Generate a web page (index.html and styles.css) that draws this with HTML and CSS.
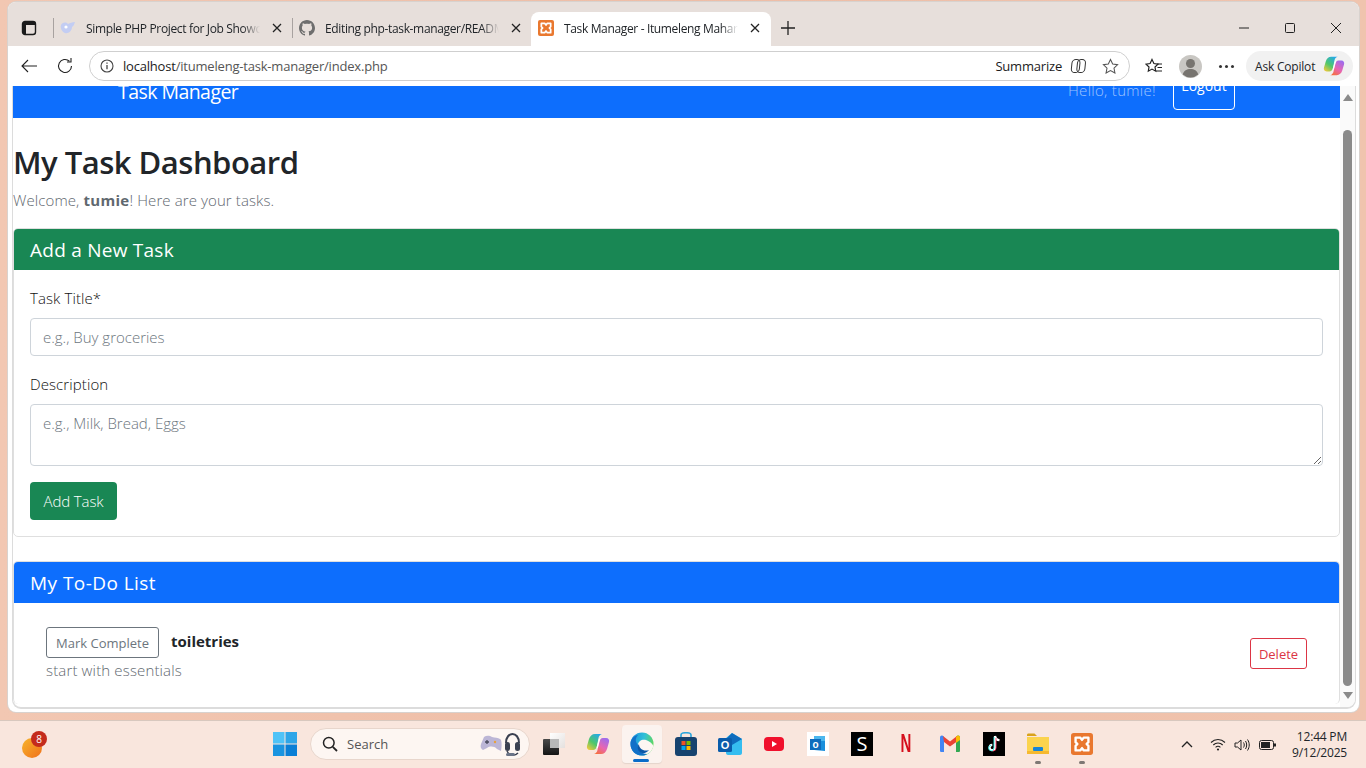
FILE: index.html
```html
<!DOCTYPE html>
<html lang="en">
<head>
  <meta charset="UTF-8" />
  <title>Task Manager - Itumeleng Maharaj</title>
  <link rel="stylesheet" href="styles.css">
</head>
<body>
  <div class="desktop">
    <div class="window">
      <div class="tabstrip">
        <svg class="tab-side" width="16" height="16" viewBox="0 0 16 16"><rect x="1.5" y="1.5" width="13" height="13" rx="2.5" fill="none" stroke="#1b1b1b" stroke-width="1.4"/><path d="M2 2h12v3H2zM2 5h3v9H2z" fill="#1b1b1b"/></svg>
        <span class="tab-sep"></span>
        <div class="tab">
          <svg width="16" height="16" viewBox="0 0 16 16"><path d="M1 5c2-3 5-3 7-1 2-1 4-2 7-2-1 2-1 4-3 5 0 4-4 7-7 6C2 12 0 8 1 5z" fill="#c3cdf3"/><circle cx="6" cy="7" r="1.600" fill="#fff"/></svg>
          <span class="tab-title">Simple PHP Project for Job Showcase</span>
          <svg class="tab-x" width="10" height="10" viewBox="0 0 10 10"><path d="M1 1l8 8M9 1l-8 8" stroke="#222" stroke-width="1.3"/></svg>
        </div>
        <span class="tab-sep"></span>
        <div class="tab">
          <svg width="16" height="16" viewBox="0 0 16 16"><path fill="#6e6e6e" d="M8 0C3.6 0 0 3.6 0 8c0 3.5 2.3 6.5 5.5 7.6.4.1.5-.2.5-.4v-1.4c-2.2.5-2.7-1-2.7-1-.4-.9-.9-1.2-.9-1.2-.7-.5.1-.5.1-.5.8.1 1.2.8 1.2.8.7 1.2 1.9.9 2.3.7.1-.5.3-.9.5-1.1-1.8-.2-3.6-.9-3.6-4 0-.9.3-1.6.8-2.1-.1-.2-.4-1 .1-2.1 0 0 .7-.2 2.2.8.6-.2 1.3-.3 2-.3s1.4.1 2 .3c1.5-1 2.2-.8 2.2-.8.4 1.1.2 1.9.1 2.1.5.6.8 1.3.8 2.1 0 3.1-1.9 3.7-3.6 3.9.3.3.5.8.5 1.5v2.2c0 .2.1.5.6.4C13.7 14.5 16 11.5 16 8c0-4.4-3.6-8-8-8z"/></svg>
          <span class="tab-title">Editing php-task-manager/README.md</span>
          <svg class="tab-x" width="10" height="10" viewBox="0 0 10 10"><path d="M1 1l8 8M9 1l-8 8" stroke="#222" stroke-width="1.3"/></svg>
        </div>
        <div class="tab tab-active">
          <svg width="16" height="16" viewBox="0 0 24 24"><use href="#xampp"/></svg>
          <span class="tab-title">Task Manager - Itumeleng Maharaj</span>
          <svg class="tab-x" width="10" height="10" viewBox="0 0 10 10"><path d="M1 1l8 8M9 1l-8 8" stroke="#222" stroke-width="1.3"/></svg>
        </div>
        <svg class="tab-plus" width="14" height="14" viewBox="0 0 14 14"><path d="M7 0v14M0 7h14" stroke="#222" stroke-width="1.3"/></svg>
        <div class="win-controls">
          <svg width="12" height="12" viewBox="0 0 12 12"><path d="M1 6h10" stroke="#222"/></svg>
          <svg width="12" height="12" viewBox="0 0 12 12"><rect x="1.5" y="1.5" width="9" height="9" rx="1" fill="none" stroke="#222"/></svg>
          <svg width="12" height="12" viewBox="0 0 12 12"><path d="M1 1l10 10M11 1L1 11" stroke="#222"/></svg>
        </div>
      </div>

      <div class="toolbar">
        <svg class="tool-back" width="18" height="16" viewBox="0 0 18 16"><path d="M17 8H2M8 2L2 8l6 6" fill="none" stroke="#222" stroke-width="1.1"/></svg>
        <svg class="tool-reload" width="18" height="18" viewBox="0 0 18 18"><path d="M15.5 9A6.5 6.5 0 1 1 13.4 4.2M15 1v4h-4" fill="none" stroke="#222" stroke-width="1.1"/></svg>
        <div class="address">
          <svg width="14" height="14" viewBox="0 0 14 14"><circle cx="7" cy="7" r="6" fill="none" stroke="#444" stroke-width="1.1"/><path d="M7 6v4.2M7 3.5v1.3" stroke="#444" stroke-width="1.3"/></svg>
          <span class="url"><span class="url-host">localhost</span>/itumeleng-task-manager/index.php</span>
          <span class="summarize">Summarize</span>
          <svg width="18" height="16" viewBox="0 0 18 16"><rect x="2.500" y="1.500" width="8" height="13" rx="3.600" transform="skewX(-6) translate(1 0)" fill="none" stroke="#333"/><rect x="7" y="1.500" width="8" height="13" rx="3.600" transform="skewX(-6) translate(2 0)" fill="none" stroke="#333"/></svg>
          <svg class="addr-star" width="17" height="17" viewBox="0 0 18 18"><path d="M9 1.500l2.300 4.900 5.200.7-3.800 3.600 1 5.200L9 13.300l-4.700 2.600 1-5.200L1.500 7.100l5.200-.7z" fill="none" stroke="#555" stroke-width="1.1"/></svg>
        </div>
        <svg class="tool-favs" width="18" height="17" viewBox="0 0 18 17"><path d="M7 1.500l1.900 4 4.100.6-3 2.900.7 4.200L7 11.100l-3.700 2.100.7-4.200-3-2.900 4.100-.6z" fill="none" stroke="#222" stroke-width="1.2"/><path d="M12 6h5M12.500 9.500H17M11 13h6" stroke="#222" stroke-width="1.100"/></svg>
        <svg class="tool-avatar" width="23" height="23" viewBox="0 0 23 23"><circle cx="11.500" cy="11.500" r="11.500" fill="#c9c7c3"/><circle cx="11.500" cy="8.500" r="4.500" fill="#77746f"/><path d="M3.800 19.500c1-4 4-5.500 7.700-5.500s6.700 1.500 7.700 5.500a11.500 11.500 0 0 1-15.400 0z" fill="#77746f"/></svg>
        <span class="tool-dots"><i></i><i></i><i></i></span>
        <div class="copilot-pill">
          <span>Ask Copilot</span>
          <svg width="22" height="22" viewBox="0 0 24 24"><use href="#copilot"/></svg>
        </div>
      </div>

      <div class="viewport">
        <div class="page">
          <nav class="navbar">
            <span class="brand">Task Manager</span>
            <div class="nav-right">
              <span class="hello">Hello, tumie!</span>
              <button class="btn-logout">Logout</button>
            </div>
          </nav>

          <div class="content">
            <h1>My Task Dashboard</h1>
            <p class="lead">Welcome, <strong>tumie</strong>! Here are your tasks.</p>

            <section class="card">
              <h2 class="card-head head-green">Add a New Task</h2>
              <form class="card-body">
                <label class="field-label" for="title">Task Title*</label>
                <input class="field" id="title" type="text" placeholder="e.g., Buy groceries">
                <label class="field-label" for="desc">Description</label>
                <textarea class="field field-area" id="desc" placeholder="e.g., Milk, Bread, Eggs"></textarea>
                <button class="btn-add" type="button">Add Task</button>
              </form>
            </section>

            <section class="card card-list">
              <h2 class="card-head head-blue">My To-Do List</h2>
              <div class="todo-row">
                <div>
                  <div class="todo-top">
                    <button class="btn-mark">Mark Complete</button>
                    <strong class="todo-name">toiletries</strong>
                  </div>
                  <div class="todo-desc">start with essentials</div>
                </div>
                <button class="btn-delete">Delete</button>
              </div>
            </section>
          </div>
        </div>

        <div class="scrollbar">
          <span class="arrow-up"></span>
          <span class="thumb"></span>
          <span class="arrow-down"></span>
        </div>
      </div>
    </div>
  </div>

  <footer class="taskbar">
    <div class="weather"><span class="sun"></span><span class="badge">8</span></div>
    <div class="task-center">
      <svg class="start" width="24" height="24" viewBox="0 0 24 24"><path d="M0 0h11.500v11.500H0z" fill="#4fc3f7"/><path d="M12.500 0H24v11.500H12.500z" fill="#2ea6e8"/><path d="M0 12.500h11.500V24H0z" fill="#1a94e0"/><path d="M12.500 12.500H24V24H12.500z" fill="#0a7fd6"/></svg>
      <div class="search">
        <svg width="16" height="16" viewBox="0 0 16 16"><circle cx="6.800" cy="6.800" r="5.300" fill="none" stroke="#222" stroke-width="1.500"/><path d="M10.800 10.800L15 15" stroke="#222" stroke-width="1.800"/></svg>
        <span class="search-text">Search</span>
        <svg class="search-art" width="42" height="26" viewBox="0 0 42 26"><path d="M1 13l3-7c3-2 6-1 8 0 3 .5 6 1 8 2 2 1 2 7 1 12l-4-2c-3-3-7-3-10-1l-4 2c-2-1-3-3-2-6z" fill="#bcb6d6"/><path d="M5 11h4M7 9v4" stroke="#4a4a5c" stroke-width="1.300"/><circle cx="15" cy="11" r="1.200" fill="#e8a03c"/><path d="M26 12c0-12 13-12 13 0" fill="none" stroke="#3a4050" stroke-width="2"/><rect x="25" y="11" width="5" height="9" rx="2.500" fill="#3a4050"/><rect x="35" y="11" width="5" height="9" rx="2.500" fill="#3a4050"/><path d="M27 20c2 5 8 5 11 2" fill="none" stroke="#3a4050" stroke-width="1.500"/><rect x="26" y="22" width="9" height="3" rx="1.500" fill="#6a7488"/></svg>
      </div>
      <div class="task-icons">
        <span class="task-icon">
          <svg width="22" height="22" viewBox="0 0 22 22"><defs><linearGradient id="tv-a" x1="0" y1="0" x2="1" y2="1"><stop offset="0" stop-color="#fff"/><stop offset="1" stop-color="#e4e0de"/></linearGradient><linearGradient id="tv-b" x1="0" y1="0" x2="0" y2="1"><stop offset="0" stop-color="#4a4a4a"/><stop offset="1" stop-color="#141414"/></linearGradient></defs><rect x="7" y="0" width="15" height="15" fill="url(#tv-a)"/><rect y="6" width="16" height="16" rx="1" fill="url(#tv-b)"/><rect x="7" y="6" width="9" height="9" fill="#b8b8b8"/></svg>
        </span>
        <span class="task-icon">
          <svg width="24" height="24" viewBox="0 0 24 24">
            <defs>
              <linearGradient id="cp-a" x1="0.800" y1="0" x2="0.100" y2="1"><stop offset="0" stop-color="#23a8ee"/><stop offset=".55" stop-color="#4fc76a"/><stop offset="1" stop-color="#f6c93a"/></linearGradient>
              <linearGradient id="cp-b" x1="0.800" y1="0" x2="0.200" y2="1"><stop offset="0" stop-color="#9a6cf0"/><stop offset=".55" stop-color="#e866b0"/><stop offset="1" stop-color="#f6703c"/></linearGradient>
              <g id="copilot">
                <path d="M9 2h7c-2 .5-3 2-3.500 4L11 14c-.7 2.500-2 4-4 4H4c-2.500 0-3.500-2-3-4l2-7c1-3 3-5 6-5z" fill="url(#cp-a)"/>
                <path d="M15 22H8c2-.5 3-2 3.500-4L13 10c.7-2.500 2-4 4-4h3c2.500 0 3.500 2 3 4l-2 7c-1 3-3 5-6 5z" fill="url(#cp-b)"/>
                <path d="M10.500 15.500l2.200-8c.3-.8 1-1.200 1.800-1.200l-2.500 9c-.3.800-.8 1.500-1.500.200z" fill="#fff"/>
              </g>
              <g id="xampp">
                <rect width="24" height="24" rx="3" fill="#e9782f"/>
                <path d="M5 5h5l2 2.500L14 5h5v5l-2 2 2 2v5h-5l-2-2.500L10 19H5v-5l2-2-2-2z" fill="none" stroke="#fff" stroke-width="2.600" stroke-linejoin="round"/>
              </g>
            </defs>
            <use href="#copilot"/>
          </svg>
        </span>
        <span class="task-icon task-icon-active">
          <svg width="24" height="24" viewBox="0 0 24 24"><defs><linearGradient id="edge-a" x1="0" y1="0.300" x2="1" y2="0.500"><stop offset="0" stop-color="#1b8fe0"/><stop offset=".55" stop-color="#2fc0d8"/><stop offset="1" stop-color="#62d85c"/></linearGradient></defs><circle cx="12" cy="12" r="11.500" fill="url(#edge-a)"/><path d="M8 13c0-4 4-6 8-5 3 1 6 3 7.500 6-1 4-3.500 7-6.500 8-5 1-9-3-9-9z" fill="#fdf6f2"/><path d="M8 13c-1 5 3 9 9 9-2 1-3 1.500-5 1.500C6 23.500 .5 19 .5 12 .5 8 3 4 8 3 5 6 5 10 8 13z" fill="#1170c8"/><path d="M9 12c0 4 3 6.500 7 6.500 1 0 2 0 3-.5-2 3-6 4-8.500 2.500C8 19 6.500 15 9 12z" fill="#0b58a8"/></svg>
          <i class="active-bar"></i>
        </span>
        <span class="task-icon">
          <svg width="22" height="24" viewBox="0 0 22 24"><path d="M6 6V3c0-3 10-3 10 0v3" fill="none" stroke="#2aa5dc" stroke-width="1.600"/><rect x="0" y="5" width="22" height="19" rx="3" fill="#17436f"/><rect x="6.500" y="9" width="4" height="4" fill="#f25022"/><rect x="11.500" y="9" width="4" height="4" fill="#7fba00"/><rect x="6.500" y="14" width="4" height="4" fill="#00a4ef"/><rect x="11.500" y="14" width="4" height="4" fill="#ffb900"/></svg>
        </span>
        <span class="task-icon">
          <svg width="24" height="24" viewBox="0 0 24 24"><path d="M14 1l10 6v14c0 1-1 2-2 2H10c-1 0-2-1-2-2V6z" fill="#35bdf0"/><path d="M14 1l10 6-10 6-6-6z" fill="#0f6cbd"/><rect y="6" width="14" height="14" rx="1.500" fill="#0a5cab"/><text x="7" y="17" class="icon-letter">O</text></svg>
        </span>
        <span class="task-icon">
          <svg width="20" height="14" viewBox="0 0 20 14"><rect width="20" height="14" rx="4" fill="#f0102c"/><path d="M8 4l5 3-5 3z" fill="#fff"/></svg>
        </span>
        <span class="task-icon">
          <svg width="22" height="24" viewBox="0 0 22 24"><rect width="22" height="24" fill="#fff"/><path d="M7 5l11-1v15l-11-1z" fill="#1a8fdc"/><path d="M7 4h11v5H7z" fill="#4cb7ee"/><rect x="3" y="7" width="11" height="11" fill="#0f6cbd"/><text x="8.500" y="15.500" class="icon-letter icon-letter-sm">o</text></svg>
        </span>
        <span class="task-icon"><span class="tile tile-s">S</span></span>
        <span class="task-icon"><span class="tile-n">N</span></span>
        <span class="task-icon">
          <svg width="20" height="17" viewBox="0 0 20 17"><path d="M0 2.500C0 1 1.500 0 3 1l1 .8V17H1.500C.5 17 0 16.500 0 15.500z" fill="#4285f4"/><path d="M20 2.500C20 1 18.500 0 17 1l-1 .8V17h2.500c1 0 1.500-.5 1.500-1.500z" fill="#34a853"/><path d="M3 1l7 5.500L17 1v5.500l-7 5-6-4.500z" fill="#ea4335"/><path d="M16 1.800L17 1c1.500-1 3 0 3 1.500V5l-4 3z" fill="#fbbc04"/></svg>
        </span>
        <span class="task-icon">
          <span class="tile">
            <svg width="16" height="18" viewBox="0 0 16 18"><path d="M9 1v11.500a2.700 2.700 0 1 1-2.700-2.700" fill="none" stroke="#fff" stroke-width="2.200"/><path d="M9 1c.3 2.600 2 4 4.500 4.200" fill="none" stroke="#fff" stroke-width="2.200"/><path d="M8 2v11a2.700 2.700 0 1 1-2.700-2.700" fill="none" stroke="#25f4ee" stroke-width=".8"/><path d="M10 3v10a3 3 0 0 1-3 3" fill="none" stroke="#fe2c55" stroke-width=".8"/></svg>
          </span>
        </span>
        <span class="task-icon">
          <svg width="22" height="22" viewBox="0 0 22 22"><path d="M0 2c0-1 .5-1.500 1.500-1.500h6L10 3h-10z" fill="#d9a21b"/><path d="M0 4h22v17H0z" fill="#fbd34d"/><rect x="6" y="14" width="10" height="4" rx="1" fill="#1684d6"/><path d="M0 18h22v3H0z" fill="#f6b92f"/></svg>
          <i class="run-dot"></i>
        </span>
        <span class="task-icon">
          <svg width="22" height="24" viewBox="0 0 24 24"><use href="#xampp"/></svg>
          <i class="run-dot"></i>
        </span>
      </div>
    </div>
    <div class="tray">
      <svg class="tray-chevron" width="12" height="7" viewBox="0 0 12 7"><path d="M1 6l5-5 5 5" fill="none" stroke="#222" stroke-width="1.300"/></svg>
      <svg width="16" height="13" viewBox="0 0 16 13"><path d="M1 4.500c4-4 10-4 14 0M3.300 7c2.700-2.700 6.700-2.700 9.400 0M5.600 9.300c1.400-1.400 3.400-1.400 4.800 0" fill="none" stroke="#222" stroke-width="1.100"/><circle cx="8" cy="11.500" r="1.100" fill="#222"/></svg>
      <svg width="17" height="14" viewBox="0 0 17 14"><path d="M1 5h2.500L7 2v10L3.500 9H1z" fill="none" stroke="#222"/><path d="M9.500 4.500c1 1.500 1 3.500 0 5M11.500 3c1.600 2.500 1.600 5.500 0 8M13.500 1.500c2.300 3.500 2.300 7.500 0 11" fill="none" stroke="#222"/></svg>
      <svg width="17" height="10" viewBox="0 0 17 10"><rect x=".5" y=".5" width="14" height="9" rx="2" fill="none" stroke="#222"/><rect x="2" y="2" width="9" height="6" fill="#222"/><rect x="15" y="3.500" width="2" height="3" fill="#222"/></svg>
      <div class="clock"><span>12:44 PM</span><span>9/12/2025</span></div>
    </div>
  </footer>
</body>
</html>
```
FILE: styles.css
```css
html, body {
  margin: 0;
  height: 768px;
  overflow: hidden;
}
body {
  display: flex;
  flex-direction: column;
  font-family: "Open Sans", "Noto Sans", sans-serif;
  color: #212529;
}
svg { flex: none; display: block; }

.desktop {
  height: 720px;
  padding: 2px 7px 8px 8px;
  box-sizing: border-box;
  background: linear-gradient(90deg, #f2c7b2, #eebda6 50%, #f0c4ae);
}
.window {
  height: 710px;
  background: #fff;
  border-radius: 8px;
  display: flex;
  flex-direction: column;
  overflow: hidden;
  box-shadow: 0 0 0 1px #d8d2ce;
}

/* browser tabs */
.tabstrip {
  height: 44px;
  background: #e7dfdb;
  display: flex;
  align-items: flex-end;
  flex: none;
}
.tab-side { margin: 0 0 10px 13px; }
.tab-sep {
  width: 1px;
  height: 20px;
  background: #a8a2a0;
  margin: 0 0 8px 16px;
}
.tab {
  width: 235px;
  height: 34px;
  box-sizing: border-box;
  display: flex;
  align-items: center;
  padding: 0 7px 2px 6px;
  gap: 10px;
  font-size: 12px;
  letter-spacing: -0.35px;
}
.tab + .tab-sep { margin-left: 3px; }
.tab-title {
  flex: 1;
  white-space: nowrap;
  overflow: hidden;
  -webkit-mask-image: linear-gradient(90deg, #000 90%, transparent);
  mask-image: linear-gradient(90deg, #000 90%, transparent);
}
.tab-x { margin-left: 2px; }
.tab-active {
  background: #fff;
  width: 240px;
  border-radius: 8px 8px 0 0;
  margin-left: 3px;
  padding-left: 7px;
  padding-right: 11px;
}
.tab-plus { margin: 0 0 11px 10px; }
.win-controls {
  margin-left: auto;
  display: flex;
  gap: 34px;
  padding: 0 17px 12px 0;
}

/* address row */
.toolbar {
  height: 40px;
  flex: none;
  display: flex;
  align-items: center;
  background: #fff;
}
.tool-back { margin-left: 12px; }
.tool-reload { margin-left: 18px; }
.address {
  width: 1041px;
  height: 30px;
  box-sizing: border-box;
  margin-left: 15px;
  border: 1px solid #cfcfcf;
  border-radius: 15px;
  display: flex;
  align-items: center;
  padding: 0 10px;
  font-size: 13px;
}
.url {
  flex: 1;
  margin-left: 9px;
  color: #555;
  letter-spacing: -0.2px;
}
.url-host { color: #1b1b1b; }
.summarize {
  margin-right: 7px;
  color: #1b1b1b;
  letter-spacing: -0.2px;
}
.addr-star { margin-left: 15px; }
.tool-favs { margin-left: 15px; }
.tool-avatar { margin-left: 16px; }
.tool-dots {
  display: flex;
  gap: 3px;
  margin-left: 17px;
}
.tool-dots i {
  width: 3px;
  height: 3px;
  border-radius: 50%;
  background: #333;
}
.copilot-pill {
  margin-left: 12px;
  width: 107px;
  height: 30px;
  box-sizing: border-box;
  border-radius: 15px;
  background: #f1f1f1;
  display: flex;
  align-items: center;
  justify-content: space-between;
  padding: 0 8px 0 9px;
  font-size: 12px;
  letter-spacing: -0.2px;
}

/* page in the browser, scrolled a little */
.viewport {
  height: 621px;
  margin: 0 4px 5px 5px;
  display: flex;
  flex: none;
  overflow: hidden;
  border-radius: 0 0 8px 8px;
  box-shadow: 0 1px 0 1px #dcdcdc;
}
.page {
  width: 1327px;
  flex: none;
  overflow: hidden;
}
.navbar {
  height: 56px;
  margin-top: -24px;
  background: #0d6efd;
  display: flex;
  align-items: center;
  justify-content: space-between;
  padding: 0 105px;
  box-sizing: border-box;
}
.brand {
  color: #fff;
  font-size: 19.5px;
  letter-spacing: -0.55px;
  padding-top: 2px;
}
.nav-right {
  display: flex;
  align-items: center;
  gap: 17px;
}
.hello {
  color: rgba(255, 255, 255, 0.6);
  font-size: 15px;
  font-weight: 300;
  letter-spacing: 0.3px;
}
.btn-logout {
  width: 62px;
  height: 38px;
  margin-top: 1px;
  background: transparent;
  border: 1px solid #fff;
  border-radius: 4px;
  color: #fff;
  font: inherit;
  font-size: 14px;
  padding: 0 0 10px;
}
.content { padding-top: 24px; }
h1 {
  margin: 0;
  font-size: 31px;
  line-height: 40px;
  font-weight: 600;
  letter-spacing: -0.5px;
}
.lead {
  margin: 7px 0 17px;
  font-size: 15px;
  line-height: 22px;
  font-weight: 300;
  color: #5f686f;
  letter-spacing: 0.1px;
}
.lead strong { font-weight: 700; letter-spacing: 0.3px; }

.card {
  border: 1px solid #dfdfdf;
  border-radius: 5px;
  overflow: hidden;
  margin-bottom: 24px;
}
.card-list { margin-bottom: 0; border-bottom: 0; }
.card-head {
  margin: 0;
  height: 41px;
  padding: 0 16px;
  box-sizing: border-box;
  font-size: 19px;
  line-height: 43px;
  font-weight: 500;
  color: #fff;
  letter-spacing: 0.25px;
}
.head-green { background: #198754; }
.head-blue { background: #0d6efd; letter-spacing: 0.45px; }
.card-body {
  padding: 16px;
  display: flex;
  flex-direction: column;
  align-items: flex-start;
}
.field-label {
  font-size: 15px;
  line-height: 24px;
  margin-bottom: 8px;
  font-weight: 300;
  color: #111;
  letter-spacing: 0.1px;
}
.field {
  width: 100%;
  height: 38px;
  box-sizing: border-box;
  border: 1px solid #ced4da;
  border-radius: 4px;
  padding: 6px 12px;
  margin-bottom: 16px;
  font: inherit;
  font-size: 15px;
  font-weight: 300;
  letter-spacing: 0;
}
.field::placeholder { color: #6c757d; }
.field-area {
  height: 62px;
  padding-top: 8px;
  display: block;
}
.btn-add {
  width: 87px;
  height: 38px;
  background: #198754;
  border: 0;
  border-radius: 4px;
  color: #fff;
  font: inherit;
  font-size: 15px;
  font-weight: 300;
  letter-spacing: -0.1px;
  padding: 0;
}

.todo-row {
  display: flex;
  align-items: center;
  justify-content: space-between;
  padding: 24px 32px;
}
.todo-top {
  display: flex;
  align-items: center;
  gap: 12px;
}
.btn-mark {
  width: 113px;
  height: 31px;
  background: #fff;
  border: 1px solid #6c757d;
  border-radius: 3px;
  color: #6c757d;
  font: inherit;
  font-size: 13px;
  letter-spacing: 0;
  padding: 0;
}
.todo-name {
  font-size: 15px;
  font-weight: 700;
  margin-top: -3px;
  letter-spacing: 0;
}
.todo-desc {
  font-size: 15px;
  line-height: 20px;
  margin-top: 2px;
  font-weight: 300;
  color: #5f686f;
  letter-spacing: 0.15px;
}
.btn-delete {
  width: 57px;
  height: 31px;
  background: #fff;
  border: 1px solid #dc3545;
  border-radius: 3px;
  color: #dc3545;
  font: inherit;
  font-size: 13px;
  letter-spacing: 0;
  padding: 0;
}

.scrollbar {
  flex: 1;
  background: #fafafa;
  display: flex;
  flex-direction: column;
  align-items: center;
  padding: 8px 0 8px;
  box-sizing: border-box;
}
.arrow-up, .arrow-down {
  width: 0;
  height: 0;
  border-left: 5px solid transparent;
  border-right: 5px solid transparent;
}
.arrow-up { border-bottom: 7px solid #8a8a8a; }
.arrow-down { border-top: 7px solid #8a8a8a; }
.thumb {
  flex: 1;
  width: 9px;
  margin: 29px 0 6px;
  background: #8a8a8a;
  border-radius: 5px;
}

/* windows taskbar */
.taskbar {
  height: 48px;
  flex: none;
  padding-bottom: 2px;
  background: #f9e6dd;
  border-top: 1px solid #d8c8be;
  box-sizing: border-box;
  display: flex;
  align-items: center;
  position: relative;
}
.weather {
  position: relative;
  width: 30px;
  height: 30px;
  margin-left: 20px;
}
.sun {
  position: absolute;
  left: 2px;
  top: 9px;
  width: 20px;
  height: 20px;
  border-radius: 50%;
  background: linear-gradient(135deg, #f7b52c, #f0701a);
}
.badge {
  position: absolute;
  left: 11px;
  top: 2px;
  width: 16px;
  height: 16px;
  border-radius: 50%;
  background: #c42b1c;
  color: #fff;
  font-size: 10px;
  line-height: 16px;
  text-align: center;
}
.task-center {
  display: flex;
  align-items: center;
  margin-left: 223px;
}
.search {
  width: 220px;
  height: 32px;
  margin-left: 13px;
  box-sizing: border-box;
  border-radius: 16px;
  border: 1px solid #e8d6cc;
  background: #fdf6f2;
  display: flex;
  align-items: center;
  padding: 0 7px 0 11px;
  font-size: 13px;
  color: #555;
}
.search-text { margin-left: 9px; flex: 1; }
.task-icons {
  display: flex;
  align-items: center;
  margin-left: 2px;
}
.task-icon {
  width: 40px;
  height: 38px;
  margin: 0 2px;
  display: flex;
  align-items: center;
  justify-content: center;
  position: relative;
  flex: none;
}
.task-icon-active {
  background: #fbf3ef;
  border-radius: 4px;
  box-shadow: 0 1px 1px #e4d4cb;
}
.active-bar {
  position: absolute;
  bottom: 1px;
  left: 11px;
  width: 16px;
  height: 3px;
  border-radius: 2px;
  background: #0a6cc9;
}
.run-dot {
  position: absolute;
  bottom: -1px;
  left: 17px;
  width: 6px;
  height: 3px;
  border-radius: 2px;
  background: #7e7874;
}
.tile {
  width: 22px;
  height: 24px;
  background: #000;
  color: #fff;
  display: flex;
  align-items: center;
  justify-content: center;
}
.tile-s {
  font-size: 20px;
}
.tile-n {
  font-family: "Liberation Sans", sans-serif;
  font-size: 25px;
  font-weight: 700;
  color: #d50f1c;
  transform: scaleX(0.6);
}
.icon-letter {
  fill: #fff;
  font-family: "Liberation Sans", sans-serif;
  font-size: 11px;
  font-weight: 700;
  text-anchor: middle;
}
.icon-letter-sm { font-size: 10px; }
.tray {
  position: absolute;
  right: 19px;
  top: 0;
  bottom: 0;
  display: flex;
  align-items: center;
  gap: 8px;
}
.tray-chevron { margin-right: 9px; }
.clock {
  margin-left: 8px;
  display: flex;
  flex-direction: column;
  align-items: flex-end;
  font-size: 12px;
  line-height: 16px;
  letter-spacing: -0.2px;
}
```
